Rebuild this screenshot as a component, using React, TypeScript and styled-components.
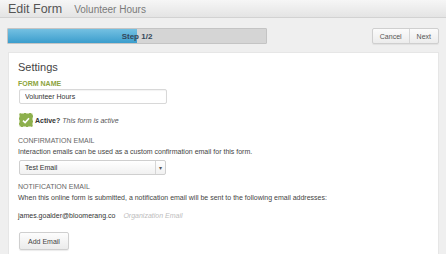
import React from "react";
import styled, { createGlobalStyle } from "styled-components";

const GlobalStyle = createGlobalStyle`
  html, body {
    margin: 0;
    padding: 0;
    background: #efefef;
    font-family: "Liberation Sans", Arial, sans-serif;
    color: #333;
  }
`;

function App() {
  return (
    <>
      <GlobalStyle />
      <StyledPage>
        <StyledHeader>
          <StyledTitle>Edit Form</StyledTitle>
          <StyledSubtitle>Volunteer Hours</StyledSubtitle>
        </StyledHeader>
        <StyledToolbar>
          <StyledProgress>
            <StyledProgressFill style={{ width: "50%" }} />
            <StyledProgressLabel>Step 1/2</StyledProgressLabel>
          </StyledProgress>
          <StyledButtonGroup>
            <StyledGroupButton>Cancel</StyledGroupButton>
            <StyledGroupButton>Next</StyledGroupButton>
          </StyledButtonGroup>
        </StyledToolbar>
        <StyledPanel>
          <StyledPanelTitle>Settings</StyledPanelTitle>
          <StyledLabel $accent>Form Name</StyledLabel>
          <StyledInput defaultValue="Volunteer Hours" />
          <StyledCheckRow>
            <StyledCheckBox>
              <svg width="8" height="7" viewBox="0 0 8 7">
                <path
                  d="M1 3.6 L3.1 5.6 L7 1.3"
                  fill="none"
                  stroke="#fff"
                  strokeWidth="1.6"
                />
              </svg>
            </StyledCheckBox>
            <StyledCheckLabel>Active?</StyledCheckLabel>
            <StyledCheckNote>This form is active</StyledCheckNote>
          </StyledCheckRow>
          <StyledLabel>Confirmation Email</StyledLabel>
          <StyledHelp>
            Interaction emails can be used as a custom confirmation email for
            this form.
          </StyledHelp>
          <StyledSelect>
            <span>Test Email</span>
            <StyledSelectArrow>▾</StyledSelectArrow>
          </StyledSelect>
          <StyledLabel>Notification Email</StyledLabel>
          <StyledHelp>
            When this online form is submitted, a notification email will be
            sent to the following email addresses:
          </StyledHelp>
          <StyledEmailRow>
            <StyledEmail>james.goalder@bloomerang.co</StyledEmail>
            <StyledEmailTag>Organization Email</StyledEmailTag>
          </StyledEmailRow>
          <StyledButton>Add Email</StyledButton>
        </StyledPanel>
      </StyledPage>
    </>
  );
}

export default App;

const StyledPage = styled.div`
  width: 446px;
  height: 254px;
  overflow: hidden;
  display: flex;
  flex-direction: column;
`;

const StyledHeader = styled.div`
  height: 17px;
  display: flex;
  align-items: center;
  gap: 12px;
  padding: 0 8px;
  background: linear-gradient(#f6f6f6, #e4e4e4);
  border-bottom: 1px solid #d2d2d2;
`;

const StyledTitle = styled.div`
  font-size: 12.5px;
  color: #555;
`;

const StyledSubtitle = styled.div`
  font-size: 10px;
  color: #7a7a7a;
  padding-top: 1px;
`;

const StyledToolbar = styled.div`
  display: flex;
  align-items: center;
  justify-content: space-between;
  padding: 10px 7px 0 7px;
`;

const StyledProgress = styled.div`
  position: relative;
  width: 258px;
  height: 14px;
  background: #d5d5d5;
  border: 1px solid #c4c4c4;
  border-radius: 1px;
  display: flex;
  align-items: center;
  justify-content: center;
`;

const StyledProgressFill = styled.div`
  position: absolute;
  left: 0;
  top: 0;
  bottom: 0;
  background: linear-gradient(#74c0e2, #3b9dcd);
`;

const StyledProgressLabel = styled.span`
  position: relative;
  font-size: 8px;
  font-weight: bold;
  color: #34475a;
`;

const StyledButtonGroup = styled.div`
  display: flex;
  border: 1px solid #cfcfcf;
  border-radius: 2px;
  background: linear-gradient(#fbfbfb, #ececec);
  box-shadow: 0 1px 1px rgba(0, 0, 0, 0.06);
`;

const StyledGroupButton = styled.div`
  height: 14px;
  padding: 0 7px;
  display: flex;
  align-items: center;
  font-size: 7px;
  color: #555;
  & + & {
    border-left: 1px solid #d6d6d6;
  }
`;

const StyledPanel = styled.div`
  flex: 1;
  margin: 8px 7px 0 8px;
  padding: 8px 9px 0 9px;
  background: #fff;
  border: 1px solid #e6e6e6;
  border-bottom: none;
  display: flex;
  flex-direction: column;
  align-items: flex-start;
`;

const StyledPanelTitle = styled.div`
  font-size: 11px;
  color: #444;
  margin-bottom: 7px;
`;

const StyledLabel = styled.div<{ $accent?: boolean }>`
  font-size: 7px;
  text-transform: uppercase;
  font-weight: ${(p) => (p.$accent ? "bold" : "normal")};
  color: ${(p) => (p.$accent ? "#8ca43c" : "#666")};
  margin-bottom: ${(p) => (p.$accent ? "2px" : "4px")};
`;

const StyledInput = styled.input`
  width: 148px;
  height: 15px;
  box-sizing: border-box;
  border: 1px solid #d8d8d8;
  border-radius: 2px;
  padding: 0 5px;
  font-family: inherit;
  font-size: 7px;
  color: #333;
  box-shadow: inset 0 1px 1px rgba(0, 0, 0, 0.05);
  margin: 0 0 9px 1px;
  outline: none;
`;

const StyledCheckRow = styled.div`
  display: flex;
  align-items: center;
  gap: 2px;
  margin: 0 0 10px 1px;
  font-size: 7px;
`;

const StyledCheckBox = styled.div`
  width: 14px;
  height: 14px;
  box-sizing: border-box;
  border: 1px dashed #c9d8a4;
  background: #8db04d;
  border-radius: 2px;
  display: flex;
  align-items: center;
  justify-content: center;
`;

const StyledCheckLabel = styled.span`
  font-weight: bold;
  color: #333;
`;

const StyledCheckNote = styled.span`
  font-style: italic;
  color: #555;
`;

const StyledHelp = styled.div`
  font-size: 7px;
  color: #444;
  margin-bottom: 5px;
`;

const StyledSelect = styled.div`
  width: 147px;
  height: 15px;
  box-sizing: border-box;
  border: 1px solid #cfcfcf;
  border-radius: 2px;
  background: linear-gradient(#ffffff, #f1f1f1);
  display: flex;
  align-items: center;
  justify-content: space-between;
  padding-left: 5px;
  font-size: 7px;
  color: #333;
  margin: 0 0 8px 1px;
`;

const StyledSelectArrow = styled.span`
  width: 9px;
  height: 100%;
  border-left: 1px solid #d6d6d6;
  display: flex;
  align-items: center;
  justify-content: center;
  font-size: 6px;
  color: #555;
`;

const StyledEmailRow = styled.div`
  display: flex;
  align-items: center;
  gap: 8px;
  margin: 6px 0 13px 0;
  font-size: 7px;
`;

const StyledEmail = styled.span`
  color: #333;
`;

const StyledEmailTag = styled.span`
  font-style: italic;
  color: #bdbdbd;
`;

const StyledButton = styled.div`
  margin-left: 1px;
  height: 16px;
  padding: 0 8px;
  display: flex;
  align-items: center;
  border: 1px solid #cfcfcf;
  border-radius: 2px;
  background: linear-gradient(#fdfdfd, #ebebeb);
  box-shadow: 0 1px 1px rgba(0, 0, 0, 0.08);
  font-size: 7px;
  color: #444;
`;
